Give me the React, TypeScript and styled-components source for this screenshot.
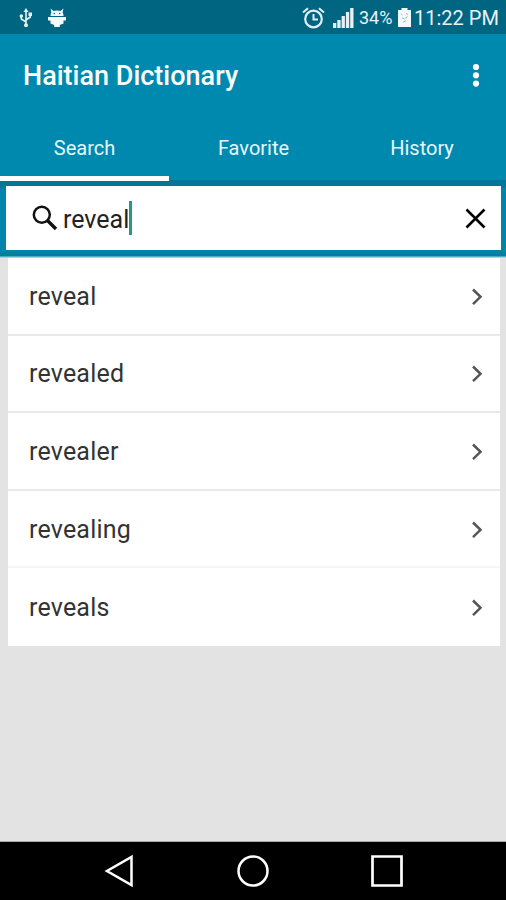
import React from 'react';
import styled, { createGlobalStyle } from 'styled-components';

const GlobalStyle = createGlobalStyle`
  * { box-sizing: border-box; }
  body { margin: 0; background: #e3e3e3; font-family: Roboto, sans-serif; }
  svg { display: block; flex: none; }
`;

const Screen = styled.div`
  width: 506px;
  height: 900px;
  display: flex;
  flex-direction: column;
  overflow: hidden;
  background: #e3e3e3;
`;

const StatusBar = styled.div`
  height: 34px;
  flex: none;
  display: flex;
  align-items: center;
  justify-content: space-between;
  padding: 1px 9px 0 19px;
  background: #006581;
  color: #e9f3f6;
`;

const StatusGroup = styled.div<{ $gap: number }>`
  display: flex;
  align-items: center;
  gap: ${({ $gap }) => $gap}px;
`;

const StatusText = styled.span<{ $size: number; $width: number }>`
  width: ${({ $width }) => $width}px;
  font-size: ${({ $size }) => $size}px;
  line-height: 34px;
  white-space: nowrap;
`;

const AppBar = styled.header`
  height: 83px;
  flex: none;
  display: flex;
  align-items: center;
  justify-content: space-between;
  padding: 0 26px 0 23px;
  background: #0089af;
`;

const Title = styled.h1`
  margin: 0;
  font-size: 27px;
  font-weight: 500;
  line-height: 32px;
  letter-spacing: 0;
  color: #fafdfe;
  white-space: nowrap;
`;

const Tabs = styled.nav`
  height: 64px;
  flex: none;
  display: grid;
  grid-template-columns: 169px 169px 168px;
  background: linear-gradient(#0089af 63px, #00779a 63px);
`;

const Tab = styled.div<{ $active?: boolean }>`
  display: flex;
  align-items: center;
  justify-content: center;
  padding-top: 2px;
  font-size: 20px;
  color: #e8f7fb;
  border-bottom: 5px solid ${({ $active }) => ($active ? '#fff' : 'transparent')};
`;

const SearchArea = styled.div`
  height: 77px;
  flex: none;
  padding: 5px 5px 7px 6px;
  background: linear-gradient(#00779a 0, #007598 4px, #0085aa 8px, #0085aa 70px, #007da1 74px, #0081a5 75px, #a5d2df 76px);
`;

const SearchBox = styled.div`
  height: 64px;
  display: flex;
  align-items: center;
  padding: 0 15px 0 26px;
  background: #fff;
`;

const Query = styled.span`
  margin: 3px 0 0 5px;
  font-size: 25px;
  line-height: 32px;
  color: #222;
`;

const Caret = styled.span`
  width: 3px;
  height: 34px;
  background: #249a84;
`;

const ClearIcon = styled.svg`
  margin-left: auto;
`;

const Results = styled.main`
  flex: 1;
  padding: 0 6px 0 8px;
  background: #e3e3e3;
  border-bottom: 1px solid #aaa;
`;

const Row = styled.div<{ $last?: boolean; $soft?: boolean }>`
  height: 77.6px;
  display: flex;
  align-items: center;
  justify-content: space-between;
  padding: 2px 17px 0 21px;
  background: #fff;
  border-bottom: ${({ $last, $soft }) => ($last ? '0' : $soft ? '2px solid #f5f5f5' : '2px solid #e9e9e9')};
`;

const Word = styled.span`
  font-size: 25px;
  line-height: 32px;
  letter-spacing: 0.2px;
  color: #333;
`;

const NavBar = styled.footer`
  height: 58px;
  flex: none;
  display: grid;
  grid-template-columns: 134px 134px 134px;
  justify-content: center;
  justify-items: center;
  align-items: center;
  background: #000;
`;

const words = ['reveal', 'revealed', 'revealer', 'revealing', 'reveals'];

const UsbIcon = () => (
  <svg width="14" height="20" viewBox="0 0 14 20" fill="none" stroke="#e5f2f6" strokeWidth="1.6">
    <path d="M7 3v14M7 14L2.3 11V8M7 12l4.3-3V6" />
    <path d="M7 0L4.5 4h5z" fill="#e5f2f6" stroke="none" />
    <circle cx="7" cy="17.3" r="2" fill="#e5f2f6" stroke="none" />
    <circle cx="2.3" cy="8" r="1.8" fill="#e5f2f6" stroke="none" />
    <path d="M9.5 4.5h3.5v3.5H9.500z" fill="#e5f2f6" stroke="none" />
  </svg>
);

const AndroidIcon = () => (
  <svg width="20" height="20" viewBox="0 0 20 20" fill="#f4fafc">
    <path d="M3.5 0.500L6.500 3Q10 1.800 13.500 3L16.500 0.500L15.600 4.300Q16.500 6 16.500 8H3.500Q3.500 6 4.400 4.300z" />
    <path d="M1 9h18v3.500h-2.500v3L12.800 17v2H7.200v-2l-3.700-1.500v-3H1z" />
    <circle cx="7.300" cy="5.500" r=".8" fill="#006581" />
    <circle cx="12.700" cy="5.500" r=".8" fill="#006581" />
  </svg>
);

const AlarmIcon = () => (
  <svg width="23" height="22" viewBox="0 0 23 22" fill="none" stroke="#e0eff4">
    <circle cx="11.500" cy="12" r="8.300" strokeWidth="2.200" />
    <path d="M11.500 7v5.500H16" strokeWidth="2" />
    <path d="M1 5.500L6 1.300M22 5.500L17 1.300" strokeWidth="2" />
  </svg>
);

const SignalIcon = () => (
  <svg width="21" height="20" viewBox="0 0 21 20" fill="#e6f1f5">
    <path d="M0 15h3.300v5H0zM4.300 12h3.300v8H4.300zM8.600 8h3.300v12H8.600zM12.900 4h3.300v16h-3.300zM17.200 0h3.300v20h-3.300z" />
  </svg>
);

const BatteryIcon = () => (
  <svg width="13" height="19" viewBox="0 0 13 19">
    <path d="M3.500 0h6v2H13v17H0V2h3.500z" fill="#f4fafc" />
    <path d="M3 6l1.500 1M8 5.500l2 1M4 10l2.500 1 3-2.500M5 14l3-1" stroke="#9fb9c1" fill="none" />
  </svg>
);

export default function App() {
  return (
    <>
      <GlobalStyle />
      <Screen>
        <StatusBar>
          <StatusGroup $gap={14}>
            <UsbIcon />
            <AndroidIcon />
          </StatusGroup>
          <StatusGroup $gap={0}>
            <AlarmIcon />
            <svg width="8" height="1" />
            <SignalIcon />
            <svg width="5" height="1" />
            <StatusText $size={18} $width={39}>34%</StatusText>
            <BatteryIcon />
            <svg width="3" height="1" />
            <StatusText $size={20} $width={83}>11:22 PM</StatusText>
          </StatusGroup>
        </StatusBar>

        <AppBar>
          <Title>Haitian Dictionary</Title>
          <svg width="8" height="26" viewBox="0 0 8 26" fill="#fff">
            <circle cx="4" cy="4" r="3.100" />
            <circle cx="4" cy="12.300" r="3.100" />
            <circle cx="4" cy="20.600" r="3.100" />
          </svg>
        </AppBar>

        <Tabs>
          <Tab $active>Search</Tab>
          <Tab>Favorite</Tab>
          <Tab>History</Tab>
        </Tabs>

        <SearchArea>
          <SearchBox>
            <svg width="26" height="26" viewBox="0 0 26 26" fill="none" stroke="#111">
              <circle cx="9.800" cy="9.800" r="8" strokeWidth="2.500" />
              <path d="M15.500 15.500L24 24" strokeWidth="3.300" />
            </svg>
            <Query>reveal</Query>
            <Caret />
            <ClearIcon width="21" height="21" viewBox="0 0 21 21" fill="none" stroke="#000" strokeWidth="2.500">
              <path d="M1.500 1.500l18 18M19.500 1.500l-18 18" />
            </ClearIcon>
          </SearchBox>
        </SearchArea>

        <Results>
          {words.map((word, i) => (
            <Row key={word} $last={i === words.length - 1} $soft={i === 3}>
              <Word>{word}</Word>
              <svg width="12" height="18" viewBox="0 0 12 18" fill="none" stroke="#555" strokeWidth="2.500">
                <path d="M2 1.500l7.500 7.300L2 16.100" />
              </svg>
            </Row>
          ))}
        </Results>

        <NavBar>
          <svg width="30" height="34" viewBox="0 0 30 34" fill="none" stroke="#fff" strokeWidth="2.500">
            <path d="M27.500 3v28L3 17z" />
          </svg>
          <svg width="34" height="34" viewBox="0 0 34 34" fill="none" stroke="#fff" strokeWidth="2.500">
            <circle cx="17" cy="17" r="14.500" />
          </svg>
          <svg width="34" height="34" viewBox="0 0 34 34" fill="none" stroke="#fff" strokeWidth="2.700">
            <path d="M2.500 2.500h29v29h-29z" />
          </svg>
        </NavBar>
      </Screen>
    </>
  );
}
